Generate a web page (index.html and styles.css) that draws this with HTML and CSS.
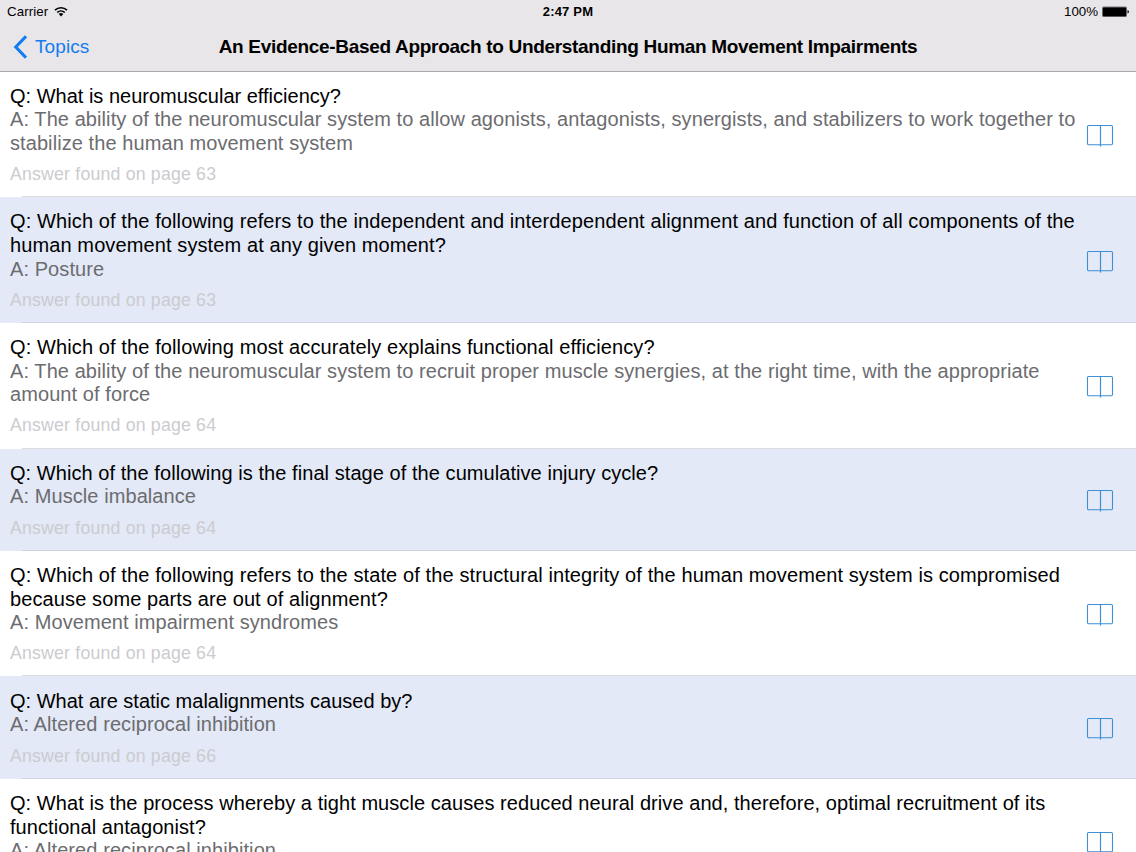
FILE: index.html
```html
<!DOCTYPE html>
<html lang="en">
<head>
    <meta charset="UTF-8">
    <meta name="viewport" content="width=device-width, initial-scale=1.0">
    <title>Topics</title>
    <link rel="stylesheet" href="styles.css">
</head>
<body>
    <svg width="0" height="0" class="symbols">
        <symbol id="book" viewBox="0 0 28 24">
            <rect x="1.5" y="1.5" width="25" height="19.3" rx="1.2" fill="none" stroke="currentColor" stroke-width="1.1"/>
            <path d="M14.5 1.5V22.6" fill="none" stroke="currentColor" stroke-width="1.2"/>
        </symbol>
    </svg>
    <header>
        <div class="status-bar">
            <div class="carrier">
                <span>Carrier</span>
                <svg width="14" height="11" viewBox="0 0 14 11">
                    <path d="M1 4.2a8.6 8.6 0 0 1 12 0M3.2 6.5a5.5 5.5 0 0 1 7.6 0" fill="none" stroke="#000" stroke-width="1.7"/>
                    <path d="M7 10.5L4.7 8.1a3.4 3.4 0 0 1 4.6 0z" fill="#000"/>
                </svg>
            </div>
            <div class="time">2:47 PM</div>
            <div class="battery">
                <span>100%</span>
                <svg width="27" height="12" viewBox="0 0 27 12">
                    <rect x="0" y="0.5" width="25" height="10.6" rx="1.5" fill="#77757a"/>
                    <rect x="0.9" y="1.4" width="23.2" height="8.8" rx="1" fill="#000"/>
                    <path d="M25.5 4q1.5.5 1.5 1.8t-1.5 1.8z" fill="#000"/>
                </svg>
            </div>
        </div>
        <nav class="nav-bar">
            <a class="back">
                <svg width="15" height="24" viewBox="0 0 15 24">
                    <path d="M14 1.4L3.8 12 14 22.6" fill="none" stroke="currentColor" stroke-width="3.1"/>
                </svg>
                <span>Topics</span>
            </a>
            <h1>An Evidence-Based Approach to Understanding Human Movement Impairments</h1>
        </nav>
    </header>
    <main>
        <div class="row">
            <div class="text">
                <p class="question plain">Q: What is neuromuscular efficiency?</p>
                <p class="answer">A: The ability of the neuromuscular system to allow agonists, antagonists, synergists, and stabilizers to work together to<br>stabilize the human movement system</p>
                <p class="page">Answer found on page 63</p>
            </div>
            <svg class="book"><use href="#book"/></svg>
        </div>
        <div class="row">
            <div class="text">
                <p class="question">Q: Which of the following refers to the independent and interdependent alignment and function of all components of the<br>human movement system at any given moment?</p>
                <p class="answer">A: Posture</p>
                <p class="page">Answer found on page 63</p>
            </div>
            <svg class="book"><use href="#book"/></svg>
        </div>
        <div class="row">
            <div class="text">
                <p class="question">Q: Which of the following most accurately explains functional efficiency?</p>
                <p class="answer">A: The ability of the neuromuscular system to recruit proper muscle synergies, at the right time, with the appropriate<br>amount of force</p>
                <p class="page">Answer found on page 64</p>
            </div>
            <svg class="book"><use href="#book"/></svg>
        </div>
        <div class="row">
            <div class="text">
                <p class="question tight">Q: Which of the following is the final stage of the cumulative injury cycle?</p>
                <p class="answer">A: Muscle imbalance</p>
                <p class="page">Answer found on page 64</p>
            </div>
            <svg class="book"><use href="#book"/></svg>
        </div>
        <div class="row">
            <div class="text">
                <p class="question">Q: Which of the following refers to the state of the structural integrity of the human movement system is compromised<br>because some parts are out of alignment?</p>
                <p class="answer">A: Movement impairment syndromes</p>
                <p class="page">Answer found on page 64</p>
            </div>
            <svg class="book"><use href="#book"/></svg>
        </div>
        <div class="row">
            <div class="text">
                <p class="question plain">Q: What are static malalignments caused by?</p>
                <p class="answer">A: Altered reciprocal inhibition</p>
                <p class="page">Answer found on page 66</p>
            </div>
            <svg class="book"><use href="#book"/></svg>
        </div>
        <div class="row">
            <div class="text">
                <p class="question tight">Q: What is the process whereby a tight muscle causes reduced neural drive and, therefore, optimal recruitment of its<br>functional antagonist?</p>
                <p class="answer">A: Altered reciprocal inhibition</p>
                <p class="page">Answer found on page 66</p>
            </div>
            <svg class="book"><use href="#book"/></svg>
        </div>
    </main>
</body>
</html>
```
FILE: styles.css
```css
* {
    box-sizing: border-box;
}
body {
    font-family: "Liberation Sans", Arial, sans-serif;
    margin: 0;
    height: 852px;
    overflow: hidden;
    display: flex;
    flex-direction: column;
    background: #fff;
    color: #000;
}
svg {
    display: block;
    flex: none;
}
.symbols {
    position: absolute;
}
header {
    height: 72px;
    flex: none;
    background: #e8e6e9;
    border-bottom: 1px solid #a9a7aa;
}
.status-bar {
    display: grid;
    grid-template-columns: 1fr auto 1fr;
    align-items: center;
    height: 23px;
    padding: 0 7px;
    font-size: 13.3px;
}
.carrier {
    display: flex;
    align-items: center;
    gap: 6px;
    letter-spacing: 0.1px;
}
.time {
    font-weight: bold;
    font-size: 13px;
    letter-spacing: 0.2px;
}
.battery {
    display: flex;
    align-items: center;
    justify-content: flex-end;
    gap: 4px;
}
.nav-bar {
    display: grid;
    grid-template-columns: 1fr auto 1fr;
    align-items: center;
    height: 48px;
    padding: 0 12px;
}
.back {
    display: flex;
    align-items: center;
    gap: 8px;
    color: #147cf0;
    font-size: 19px;
    letter-spacing: 0.1px;
}
h1 {
    margin: 0;
    font-size: 19px;
    font-weight: bold;
    letter-spacing: -0.31px;
    white-space: nowrap;
}
main {
    flex: 1;
    min-height: 0;
    overflow: hidden;
}
.row {
    display: flex;
    align-items: center;
    justify-content: space-between;
    padding: 13.4px 22px 10.1px 10px;
    background: linear-gradient(#dcdce2, #dcdce2) 22px 100% / 100% 1px no-repeat #fff;
}
.row:first-child {
    padding-top: 12.6px;
}
.row:nth-child(even) {
    background: linear-gradient(#d0d3e0, #d0d3e0) 22px 100% / 100% 1px no-repeat #e3e9f6;
}
.text {
    white-space: nowrap;
}
p {
    margin: 0;
}
.question, .answer {
    font-size: 20px;
    line-height: 23.6px;
}
.question {
    letter-spacing: 0.11px;
}
.question.tight {
    letter-spacing: 0.06px;
}
.question.plain {
    letter-spacing: 0;
}
.answer {
    color: #6c6c70;
    letter-spacing: 0.08px;
}
.page {
    margin-top: 5.5px;
    font-size: 17.7px;
    line-height: 26px;
    letter-spacing: 0.2px;
    color: #cbcbd0;
}
.book {
    width: 28px;
    height: 24px;
    color: #3d8fd6;
}
```
